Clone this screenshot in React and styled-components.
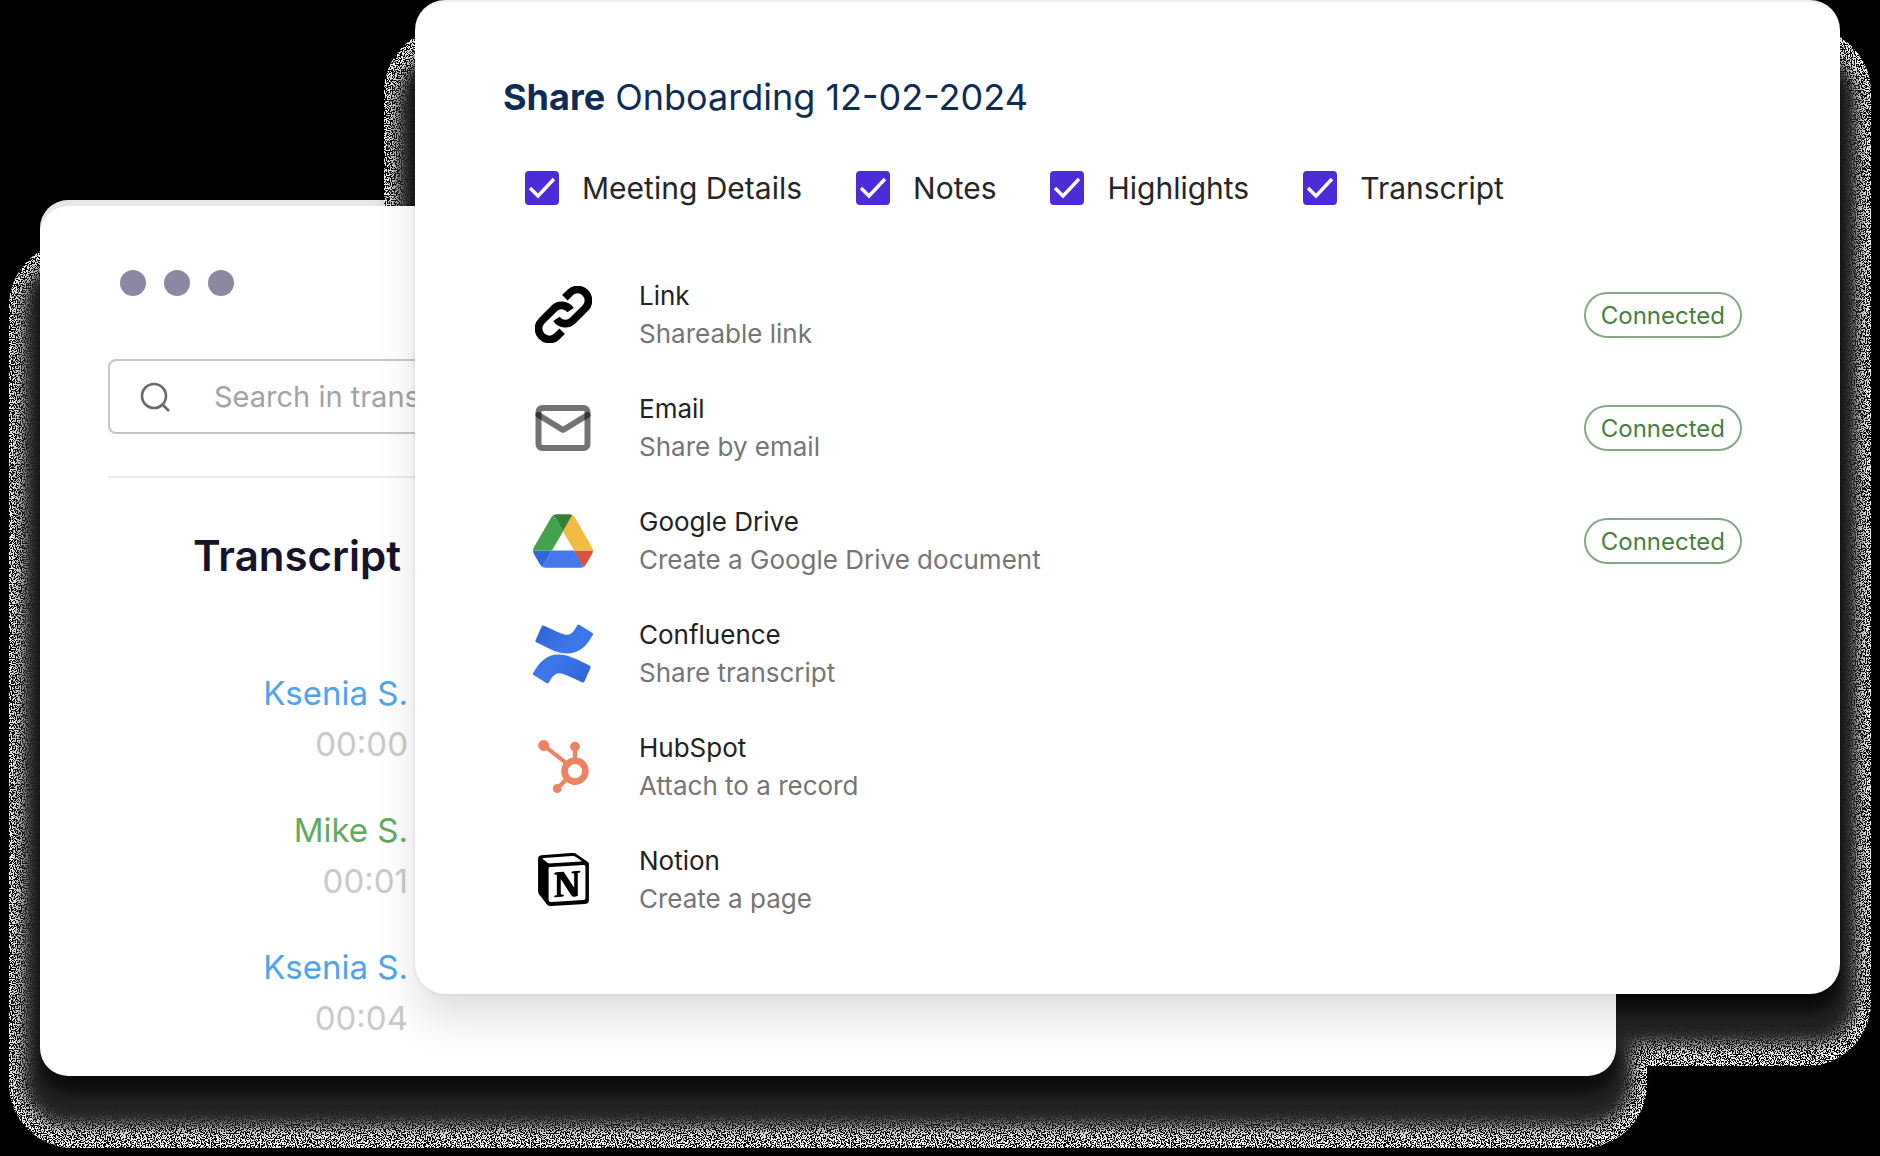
import React from "react";
import styled, { createGlobalStyle } from "styled-components";
import { SiConfluence, SiHubspot, SiNotion } from "react-icons/si";

const GlobalStyle = createGlobalStyle`
  *, *::before, *::after { box-sizing: border-box; }
  body {
    margin: 0;
    background: #000;
    font-family: Inter, "Liberation Sans", sans-serif;
  }
`;

const Stage = styled.main`
  display: grid;
  grid-template-columns: 40px 375px minmax(0, 1fr) 224px 40px;
  grid-template-rows: 206px auto 82px 80px;
  min-height: 100vh;
  overflow: hidden;
`;

const backArea = "2 / 2 / 4 / 4";
const frontArea = "1 / 3 / 3 / 5";

const Halo = styled.div`
  grid-area: ${(p) => p.$area};
  z-index: 0;
  margin: ${(p) => (p.$front ? 28 : 36)}px -31px -72px;
  border-radius: 64px;
  background: #fff;
  filter: url(#grain);
`;

const Shade = styled.div`
  grid-area: ${(p) => p.$area};
  z-index: 1;
  margin-top: 40px;
  border-radius: 28px;
  background: #0a0a0a;
  box-shadow: 0 18px 16px 0 #0c0c0c, 0 34px 14px 12px #242424,
    0 32px 20px 18px rgba(60, 60, 60, 0.7);
`;

const TopEdge = styled.div`
  grid-area: 2 / 2 / 3 / 3;
  z-index: 0;
  align-self: start;
  height: 60px;
  margin: -6px 30px 0 0;
  border-radius: 28px 0 0 0;
  background: #e7e6e8;
`;

const BackWindow = styled.section`
  grid-area: ${backArea};
  z-index: 2;
  padding: 64px 68px 0;
  border-radius: 28px;
  background: #fff;
`;

const FrontWindow = styled.section`
  grid-area: ${frontArea};
  z-index: 3;
  padding: 67px 98px 57px 88px;
  border-top: 2px solid #efefef;
  border-radius: 30px;
  background: #fff;
  box-shadow: 0 0 3px 1px rgba(0, 0, 0, 0.08), 0 26px 40px rgba(0, 0, 0, 0.12);
`;

const Dots = styled.div`
  display: flex;
  gap: 18px;
  padding-left: 12px;
`;

const Dot = styled.span`
  width: 26px;
  height: 26px;
  border-radius: 50%;
  background: #8c88a4;
`;

const SearchBox = styled.label`
  display: flex;
  align-items: center;
  gap: 44px;
  height: 75px;
  margin-top: 63px;
  padding: 0 29px;
  border: 2px solid #c6c6c6;
  border-radius: 8px;
`;

const SearchInput = styled.input`
  flex: 1;
  min-width: 0;
  padding: 0;
  border: 0;
  outline: 0;
  background: none;
  font: 400 29px/40px Inter, "Liberation Sans", sans-serif;
  color: #333;
  &::placeholder { color: #a3a3a3; opacity: 1; }
`;

const Divider = styled.hr`
  height: 2px;
  margin: 42px 0 0;
  border: 0;
  background: #ebebed;
`;

const PaneTitle = styled.h2`
  margin: 52px 0 0;
  padding-left: 85px;
  font-size: 42px;
  line-height: 52px;
  font-weight: 600;
  color: #16132a;
`;

const Speakers = styled.ol`
  display: grid;
  gap: 35px;
  width: 300px;
  margin: 86px 0 0;
  padding: 0;
  list-style: none;
  text-align: right;
  font-size: 33px;
  line-height: 51px;
`;

const Speaker = styled.div`
  color: ${(p) => p.$color};
`;

const Time = styled.div`
  color: #cacaca;
`;

const Title = styled.h1`
  margin: 0;
  font-size: 36px;
  line-height: 56px;
  font-weight: 400;
  color: #0e2c54;
`;

const Strong = styled.strong`
  font-weight: 700;
`;

const Options = styled.div`
  display: flex;
  flex-wrap: wrap;
  gap: 54px;
  padding: 43px 0 0 22px;
`;

const Option = styled.label`
  display: flex;
  align-items: center;
  gap: 23px;
  font-size: 30px;
  line-height: 40px;
  color: #262626;
`;

const CheckWrap = styled.span`
  display: grid;
  width: 34px;
  height: 34px;
  > * { grid-area: 1 / 1; }
`;

const Check = styled.input`
  appearance: none;
  width: 34px;
  height: 34px;
  margin: 0;
  border: 2px solid #4e2bd8;
  border-radius: 4px;
  background: #fff;
  &:checked { background: #4e2bd8; }
`;

const Tick = styled.svg`
  width: 34px;
  height: 34px;
  pointer-events: none;
`;

const Targets = styled.ul`
  margin: 50px 0 0;
  padding: 0 0 0 24px;
  list-style: none;
`;

const Target = styled.li`
  display: flex;
  align-items: center;
  height: 113px;
`;

const IconSlot = styled.span`
  display: flex;
  justify-content: center;
  width: 72px;
  margin-right: 40px;
`;

const TargetText = styled.div`
  flex: 1;
  font-size: 26px;
  line-height: 38px;
`;

const Name = styled.div`
  color: #222;
`;

const Detail = styled.div`
  color: #757575;
`;

const Badge = styled.span`
  padding: 1px 15px 0;
  border: 2px solid #86a886;
  border-radius: 23px;
  font-size: 24px;
  line-height: 41px;
  color: #47803f;
`;

const LinkIcon = () => (
  <svg width="57" height="57" viewBox="30 30 170 170" fill="none" stroke="#000" strokeWidth="23">
    <path d="M111 165 L96 180 A32 32 0 0 1 50 134 L87 97 A32 32 0 0 1 136 102" />
    <path d="M111 165 L96 180 A32 32 0 0 1 50 134 L87 97 A32 32 0 0 1 136 102" transform="rotate(180 115 115)" />
  </svg>
);

const MailIcon = () => (
  <svg width="56" height="46" viewBox="0 0 56 46" fill="none" stroke="#000" strokeWidth="6">
    <rect x="3.5" y="3" width="49" height="40" rx="4" strokeOpacity="0.55" />
    <path d="M3.5 10 L28 25 L52.5 10" strokeOpacity="0.55" strokeLinecap="round" strokeLinejoin="round" />
  </svg>
);

const DriveIcon = () => (
  <svg width="60" height="54" viewBox="0 0 87.3 78">
    <path d="m6.6 66.85 3.85 6.65c.8 1.4 1.95 2.5 3.3 3.3l13.75-23.8h-27.5c0 1.55.4 3.1 1.2 4.5z" fill="#2f68d8" />
    <path d="m43.65 25-13.75-23.8c-1.35.8-2.5 1.9-3.3 3.3l-25.4 44a9.06 9.06 0 0 0 -1.2 4.5h27.5z" fill="#43a34c" />
    <path d="m73.55 76.8c1.35-.8 2.5-1.9 3.3-3.3l1.6-2.75 7.65-13.25c.8-1.4 1.2-2.95 1.2-4.5h-27.5l5.85 11.5z" fill="#dd5040" />
    <path d="m43.65 25 13.75-23.8c-1.35-.8-2.9-1.2-4.5-1.2h-18.5c-1.6 0-3.15.45-4.5 1.2z" fill="#37803a" />
    <path d="m59.8 53h-32.3l-13.75 23.8c1.35.8 2.9 1.2 4.5 1.2h50.8c1.6 0 3.15-.45 4.5-1.2z" fill="#4479ee" />
    <path d="m73.4 26.5-12.7-22c-.8-1.4-1.95-2.5-3.3-3.3l-13.75 23.8 16.15 28h27.45c0-1.55-.4-3.1-1.2-4.5z" fill="#f2bb42" />
  </svg>
);

const SearchIcon = () => (
  <svg width="31" height="31" viewBox="0 0 31 31" fill="none" stroke="#6a6a6a" strokeWidth="2.6">
    <circle cx="15" cy="15" r="12" />
    <path d="M23 23 L30 30" />
  </svg>
);

const Defs = styled.svg`
  position: absolute;
  width: 0;
  height: 0;
`;

const targets = [
  { name: "Link", detail: "Shareable link", icon: <LinkIcon />, connected: true },
  { name: "Email", detail: "Share by email", icon: <MailIcon />, connected: true },
  { name: "Google Drive", detail: "Create a Google Drive document", icon: <DriveIcon />, connected: true },
  { name: "Confluence", detail: "Share transcript", icon: <SiConfluence size={60} fill="url(#confluence)" /> },
  { name: "HubSpot", detail: "Attach to a record", icon: <SiHubspot size={53} color="#ee8363" /> },
  { name: "Notion", detail: "Create a page", icon: <SiNotion size={53} color="#000" /> },
];

const speakers = [
  { name: "Ksenia S.", time: "00:00", color: "#4ea4ec" },
  { name: "Mike S.", time: "00:01", color: "#62a95f" },
  { name: "Ksenia S.", time: "00:04", color: "#4ea4ec" },
];

const options = ["Meeting Details", "Notes", "Highlights", "Transcript"];

export default function App() {
  return (
    <>
      <GlobalStyle />
      <Defs aria-hidden="true">
        <filter id="grain" x="0" y="0" width="100%" height="100%" colorInterpolationFilters="sRGB">
          <feTurbulence type="fractalNoise" baseFrequency="0.8" numOctaves="2" seed="4" />
          <feColorMatrix values="24 0 0 0 -11.4  24 0 0 0 -11.4  24 0 0 0 -11.4  0 0 0 0 1" />
          <feComposite in2="SourceGraphic" operator="in" />
        </filter>
        <linearGradient id="confluence" x1="0" y1="0" x2="1" y2="1">
          <stop offset="0" stopColor="#2a62d0" />
          <stop offset="0.5" stopColor="#3f78ec" />
          <stop offset="1" stopColor="#2a62d0" />
        </linearGradient>
      </Defs>
      <Stage>
        <Halo $area={backArea} />
        <TopEdge />
        <Halo $area={frontArea} $front />
        <Shade $area={backArea} />
        <Shade $area={frontArea} />
        <BackWindow>
          <Dots>
            <Dot />
            <Dot />
            <Dot />
          </Dots>
          <SearchBox>
            <SearchIcon />
            <SearchInput type="search" aria-label="Search" placeholder="Search in transcript" />
          </SearchBox>
          <Divider />
          <PaneTitle>Transcript</PaneTitle>
          <Speakers>
            {speakers.map((s) => (
              <li key={s.time}>
                <Speaker $color={s.color}>{s.name}</Speaker>
                <Time>{s.time}</Time>
              </li>
            ))}
          </Speakers>
        </BackWindow>
        <FrontWindow>
          <Title>
            <Strong>Share</Strong> Onboarding 12-02-2024
          </Title>
          <Options>
            {options.map((label) => (
              <Option key={label}>
                <CheckWrap>
                  <Check type="checkbox" defaultChecked />
                  <Tick viewBox="0 0 34 34" fill="none" stroke="#fff" strokeWidth="3.4">
                    <path d="M5 17 L13 25 L29 8" />
                  </Tick>
                </CheckWrap>
                {label}
              </Option>
            ))}
          </Options>
          <Targets>
            {targets.map((t) => (
              <Target key={t.name}>
                <IconSlot>{t.icon}</IconSlot>
                <TargetText>
                  <Name>{t.name}</Name>
                  <Detail>{t.detail}</Detail>
                </TargetText>
                {t.connected && <Badge>Connected</Badge>}
              </Target>
            ))}
          </Targets>
        </FrontWindow>
      </Stage>
    </>
  );
}
